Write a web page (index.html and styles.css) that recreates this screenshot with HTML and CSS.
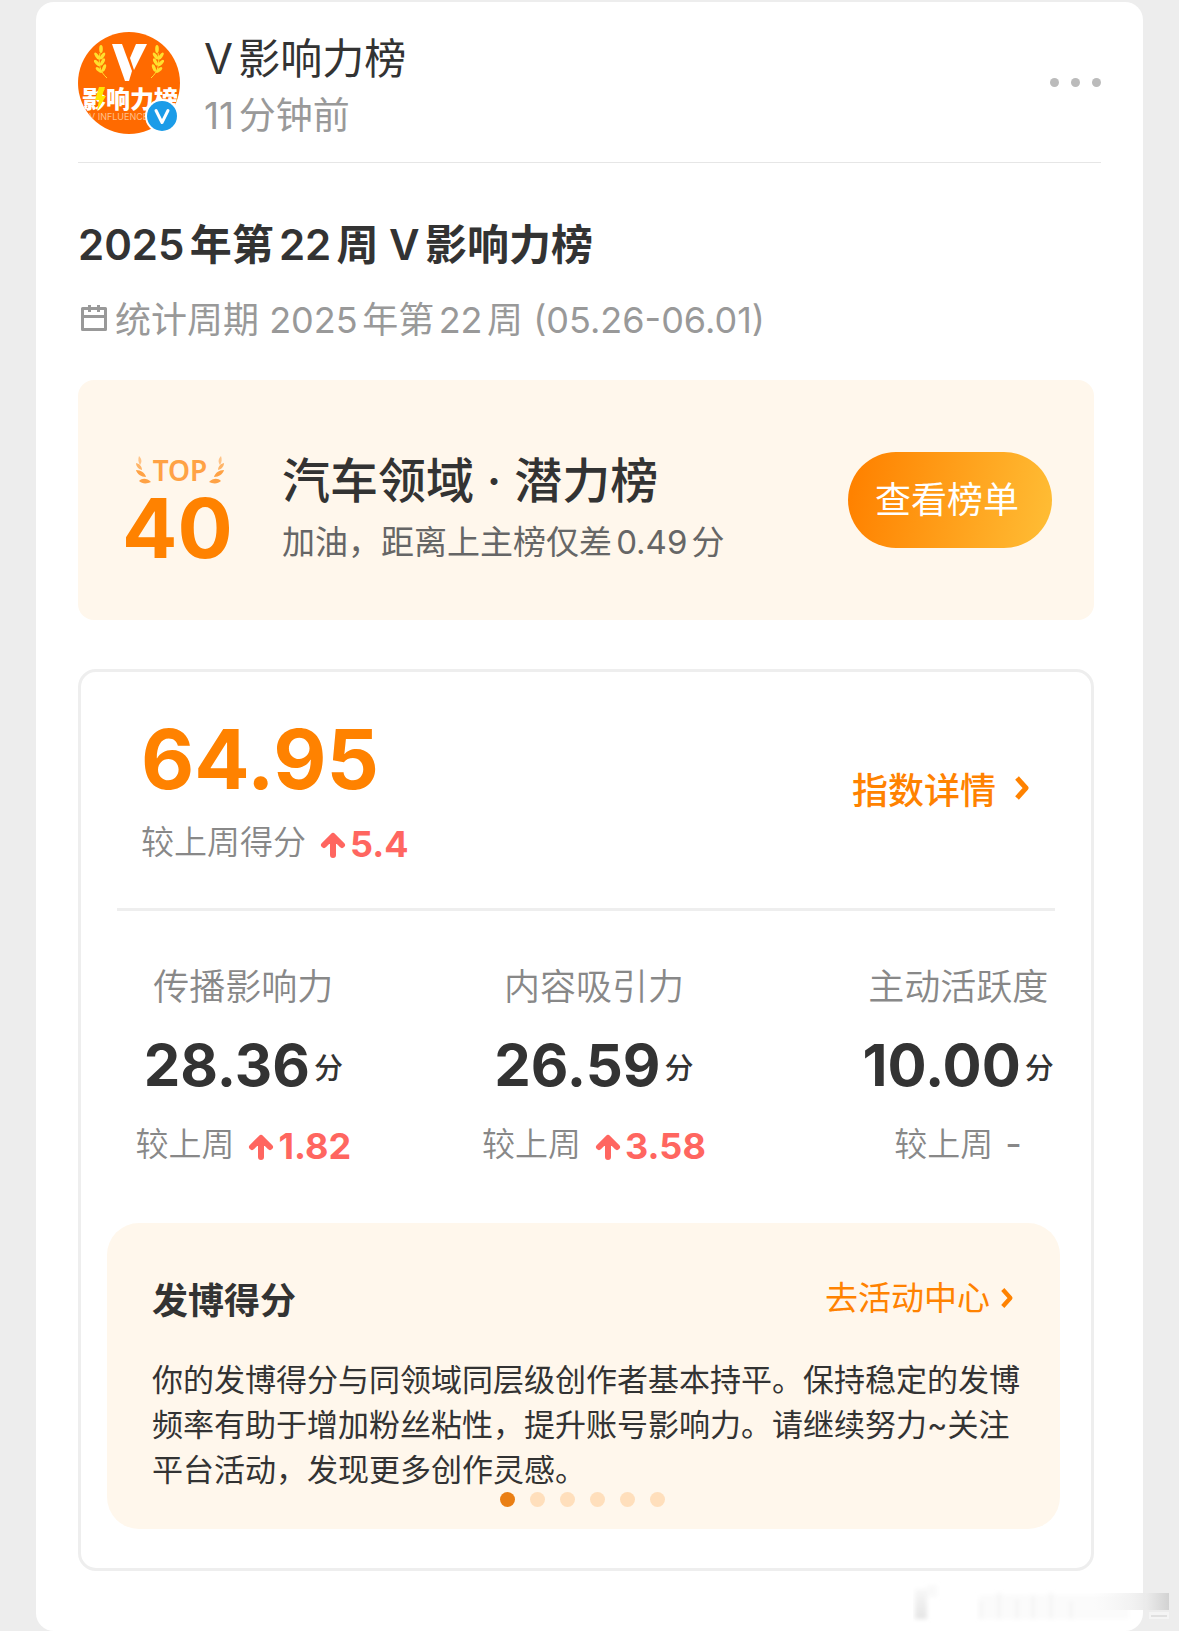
FILE: index.html
```html
<!DOCTYPE html>
<html lang="zh-CN">
<head>
    <meta charset="UTF-8">
    <meta name="viewport" content="width=device-width, initial-scale=1.0">
    <title>V影响力榜</title>
    <link rel="stylesheet" href="styles.css">
</head>
<body>
    <svg width="0" height="0" class="symbols" aria-hidden="true">
        <symbol id="icon-up" viewBox="0 0 26 28">
            <path d="M13 24V8M4 14l9-9 9 9" fill="none" stroke="currentColor" stroke-width="6" stroke-linecap="round" stroke-linejoin="round"/>
            <path d="M13 5l7 8H6Z" fill="currentColor"/>
        </symbol>
        <symbol id="icon-right" viewBox="0 0 16 26">
            <path d="M3 3l9 10L3 23" fill="none" stroke="currentColor" stroke-width="5" stroke-linejoin="round"/>
        </symbol>
        <symbol id="icon-wheat" viewBox="0 0 14 34">
            <path d="M13 33C6 27 4 19 6 8" fill="none" stroke="currentColor" stroke-width="1"/>
            <g fill="currentColor">
                <ellipse cx="7" cy="4" rx="1.800" ry="4"/>
                <ellipse cx="3" cy="11" rx="1.700" ry="4" transform="rotate(-35 3 11)"/>
                <ellipse cx="8.500" cy="11" rx="1.700" ry="4" transform="rotate(35 8.500 11)"/>
                <ellipse cx="3" cy="18" rx="1.700" ry="4" transform="rotate(-45 3 18)"/>
                <ellipse cx="8.500" cy="17" rx="1.700" ry="4" transform="rotate(30 8.500 17)"/>
                <ellipse cx="5" cy="25" rx="1.700" ry="4" transform="rotate(-50 5 25)"/>
                <ellipse cx="10" cy="23" rx="1.700" ry="4" transform="rotate(20 10 23)"/>
            </g>
        </symbol>
        <symbol id="icon-laurel" viewBox="0 0 16 28">
            <g fill="currentColor">
                <path d="M4 0C7 3 7 6 5 9 3 6 3 3 4 0Z" opacity=".6"/>
                <path d="M1 7c4 1 6 4 6 7-4-1-6-4-6-7Z" opacity=".8"/>
                <path d="M1 14c5 0 9 3 10 7-5 0-9-3-10-7Z"/>
                <path d="M4 25c3-3 8-3 12 1-4 2-9 2-12-1Z"/>
            </g>
        </symbol>
    </svg>

    <div class="page-card">
        <header class="header">
            <svg class="avatar" viewBox="0 0 102 102" role="img" aria-label="V影响力榜">
                <defs>
                    <clipPath id="round"><circle cx="51" cy="51" r="51"/></clipPath>
                </defs>
                <g clip-path="url(#round)">
                    <rect width="102" height="102" fill="#ff6a00"/>
                    <path d="M34 12h10l10 27-3 10h-4Z" fill="#fff"/>
                    <path d="M58 12h11L56 38l-4-12Z" fill="#fff"/>
                    <g color="#ffe02e">
                        <use href="#icon-wheat" x="16" y="13" width="14" height="34"/>
                        <use href="#icon-wheat" x="16" y="13" width="14" height="34" transform="translate(102 0) scale(-1 1)"/>
                    </g>
                    <text x="4" y="76" class="avatar-title">影响力榜</text>
                    <path d="M21 55h6l-3 9h4l-9 15 2-11h-4Z" fill="#ffe600"/>
                    <text x="11" y="88" class="avatar-sub">V INFLUENCE</text>
                </g>
                <circle cx="84" cy="84" r="17" fill="#fff"/>
                <circle cx="84" cy="84" r="15" fill="#1b9ce8"/>
                <path d="M78 78.500 84 90.500l6-12" fill="none" stroke="#fff" stroke-width="3" stroke-linecap="round" stroke-linejoin="round"/>
            </svg>
            <div class="author">
                <div class="author-name">V影响力榜</div>
                <div class="author-time">11分钟前</div>
            </div>
            <button class="more" aria-label="更多"><i></i><i></i><i></i></button>
        </header>

        <main class="content">
            <h1 class="title">2025年第22周 V影响力榜</h1>
            <div class="period">
                <svg class="calendar" viewBox="0 0 26 26" aria-hidden="true">
                    <path d="M1.500 3.500h23v21h-23ZM1.500 11.500h23M8.500 0v7M17.500 0v7" fill="none" stroke="currentColor" stroke-width="3" stroke-linejoin="round"/>
                </svg>
                <span>统计周期 2025年第22周 (05.26-06.01)</span>
            </div>

            <section class="banner">
                <div class="rank">
                    <div class="rank-top">
                        <svg class="laurel" aria-hidden="true"><use href="#icon-laurel"/></svg>
                        <span>TOP</span>
                        <svg class="laurel laurel-right" aria-hidden="true"><use href="#icon-laurel"/></svg>
                    </div>
                    <div class="rank-num">40</div>
                </div>
                <div class="banner-text">
                    <h2>汽车领域 · 潜力榜</h2>
                    <p>加油，距离上主榜仅差0.49分</p>
                </div>
                <button class="banner-btn">查看榜单</button>
            </section>

            <section class="score-card">
                <div class="score-head">
                    <div>
                        <div class="score">64.95</div>
                        <div class="delta score-delta">较上周得分 <svg class="up" aria-hidden="true"><use href="#icon-up"/></svg><b>5.4</b></div>
                    </div>
                    <a href="#" class="detail-link">指数详情 <svg class="chevron" aria-hidden="true"><use href="#icon-right"/></svg></a>
                </div>

                <div class="metrics">
                    <div class="metric">
                        <div class="metric-label">传播影响力</div>
                        <div class="metric-value">28.36<small>分</small></div>
                        <div class="delta">较上周 <svg class="up" aria-hidden="true"><use href="#icon-up"/></svg><b>1.82</b></div>
                    </div>
                    <div class="metric">
                        <div class="metric-label">内容吸引力</div>
                        <div class="metric-value">26.59<small>分</small></div>
                        <div class="delta">较上周 <svg class="up" aria-hidden="true"><use href="#icon-up"/></svg><b>3.58</b></div>
                    </div>
                    <div class="metric">
                        <div class="metric-label">主动活跃度</div>
                        <div class="metric-value">10.00<small>分</small></div>
                        <div class="delta">较上周<span class="flat">-</span></div>
                    </div>
                </div>

                <div class="tip">
                    <div class="tip-head">
                        <h3>发博得分</h3>
                        <a href="#" class="tip-link">去活动中心 <svg class="chevron" aria-hidden="true"><use href="#icon-right"/></svg></a>
                    </div>
                    <p>你的发博得分与同领域同层级创作者基本持平。保持稳定的发博频率有助于增加粉丝粘性，提升账号影响力。请继续努力~关注平台活动，发现更多创作灵感。</p>
                    <div class="dots">
                        <button class="dot active" aria-label="第1页"></button>
                        <button class="dot" aria-label="第2页"></button>
                        <button class="dot" aria-label="第3页"></button>
                        <button class="dot" aria-label="第4页"></button>
                        <button class="dot" aria-label="第5页"></button>
                        <button class="dot" aria-label="第6页"></button>
                    </div>
                </div>
            </section>
        </main>

        <!-- faded mark over the bottom right corner -->
        <svg class="mark" viewBox="0 0 260 44" aria-hidden="true">
            <defs>
                <linearGradient id="fade" x1="0" y1="0" x2="0" y2="1">
                    <stop offset="0" stop-color="#f8f8f8"/>
                    <stop offset="1" stop-color="#e4e4e4"/>
                </linearGradient>
                <linearGradient id="smear" x1="0" y1="0" x2="1" y2="0">
                    <stop offset="0" stop-color="#f4f4f4" stop-opacity="0"/>
                    <stop offset=".7" stop-color="#ebebeb"/>
                    <stop offset="1" stop-color="#d2d2d2"/>
                </linearGradient>
                <filter id="soft"><feGaussianBlur stdDeviation="2"/></filter>
            </defs>
            <g filter="url(#soft)">
                <rect x="2" y="8" width="12" height="30" fill="url(#fade)"/>
                <rect x="14" y="4" width="10" height="12" fill="#f9f9f9"/>
                <path d="M66 14h150v24h-150z" fill="#fbfbfb"/>
                <path d="M66 20h4v18h-4zM84 12h4v26h-4zM102 18h4v20h-4zM118 14h4v24h-4zM136 12h4v26h-4zM156 20h4v18h-4z" fill="#f5f5f5"/>
            </g>
            <rect x="180" y="12" width="76" height="17" fill="url(#smear)"/>
            <path d="M236 31h20v7h-20z" fill="#f4f4f4"/>
            <path d="M238 34h16v2h-16z" fill="#e0e0e0"/>
        </svg>
    </div>
</body>
</html>
```
FILE: styles.css
```css
* {
    box-sizing: border-box;
}
body {
    margin: 0;
    background-color: #ededed;
    color: #333;
    font-family: Inter, "Noto Sans CJK SC", sans-serif;
    text-autospace: normal;
}
h1, h2, h3, p {
    margin: 0;
}
a {
    text-decoration: none;
}
button {
    padding: 0;
    border: none;
    font-family: inherit;
    cursor: pointer;
}
.symbols {
    position: absolute;
}
.page-card {
    position: relative;
    margin: 2px 36px 0;
    padding: 28px 42px 60px;
    background-color: #fff;
    border-radius: 18px;
}

/* header */
.header {
    display: flex;
    align-items: flex-start;
    padding-bottom: 18px;
    border-bottom: 1px solid #e6e6e6;
}
.avatar {
    width: 102px;
    height: 102px;
    margin: 2px 24px 0 0;
}
.avatar-title {
    fill: #fff;
    font-size: 24px;
    font-weight: 900;
}
.avatar-sub {
    fill: #ffc08a;
    font-size: 9px;
}
.author {
    flex: 1;
    line-height: 57px;
}
.author-name {
    font-size: 42px;
}
.author-time {
    font-size: 37px;
    color: #999;
}
.more {
    display: flex;
    gap: 12px;
    padding: 48px 0 10px;
    background: none;
}
.more i {
    width: 9px;
    height: 9px;
    border-radius: 50%;
    background-color: #bbb;
}

.content {
    padding-right: 7px;
}
.title {
    margin-top: 52px;
    font-size: 42px;
    line-height: 60px;
    font-weight: 600;
}
.period {
    display: flex;
    align-items: center;
    gap: 8px;
    margin-top: 20px;
    padding-left: 3px;
    font-size: 36px;
    line-height: 50px;
    color: #999;
}
.calendar {
    width: 26px;
    height: 26px;
    margin-bottom: 4px;
}

/* rank banner */
.banner {
    display: flex;
    align-items: center;
    margin-top: 35px;
    padding: 49px 42px 49px 44px;
    background-color: #fff7ec;
    border-radius: 16px;
}
.rank {
    width: 106px;
    margin-right: 54px;
    padding-top: 24px;
    text-align: center;
    color: #ff8200;
}
.rank-top {
    display: flex;
    justify-content: center;
    align-items: center;
    gap: 2px;
    padding-left: 10px;
    font-family: "Noto Sans", sans-serif;
    font-size: 28px;
    line-height: 30px;
    font-weight: 600;
    color: #ffa245;
}
.laurel {
    width: 16px;
    height: 28px;
}
.laurel-right {
    transform: scaleX(-1);
}
.rank-num {
    margin-top: 4px;
    font-size: 82px;
    line-height: 80px;
    font-weight: 700;
}
.banner-text {
    flex: 1;
    padding-top: 20px;
}
.banner-text h2 {
    font-size: 48px;
    line-height: 64px;
    font-weight: 500;
}
.banner-text p {
    font-size: 33px;
    line-height: 58px;
    color: #666;
}
.banner-btn {
    width: 204px;
    height: 96px;
    padding: 0 6px 6px 0;
    border-radius: 48px;
    background: linear-gradient(100deg, #ff8200 5%, #ffbb33 95%);
    color: #fff;
    font-size: 36px;
}

/* score card */
.score-card {
    margin-top: 49px;
    padding-bottom: 39px;
    border: 3px solid #eee;
    border-radius: 18px;
}
.score-head {
    display: flex;
    justify-content: space-between;
    align-items: center;
    margin: 0 36px;
    padding: 48px 25px 41px 24px;
    border-bottom: 3px solid #eee;
}
.score {
    font-size: 82px;
    line-height: 80px;
    font-weight: 700;
    color: #ff8200;
}
.delta {
    display: flex;
    align-items: center;
    justify-content: center;
    font-size: 33px;
    line-height: 50px;
    font-weight: 350;
    color: #888;
}
.score-delta {
    justify-content: flex-start;
    margin-top: 17px;
}
.delta b {
    margin-top: 4px;
    font-size: 36px;
    line-height: 46px;
    font-weight: 700;
    color: #ff6660;
}
.up {
    width: 26px;
    height: 28px;
    margin: 6px 4px 0 14px;
    color: #ff6660;
}
.flat {
    margin-left: 12px;
    font-size: 36px;
    font-weight: 400;
}
.detail-link, .tip-link {
    display: flex;
    align-items: center;
    gap: 18px;
    font-size: 36px;
    font-weight: 500;
    color: #ff8200;
}
.detail-link {
    padding-bottom: 12px;
}
.chevron {
    width: 16px;
    height: 26px;
}
.metrics {
    display: grid;
    grid-template-columns: 8fr 8fr 9fr;
    column-gap: 134px;
    padding: 51px 11px 0 54px;
    text-align: center;
    white-space: nowrap;
}
.metric {
    display: flex;
    flex-direction: column;
    align-items: center;
    min-width: 0;
}
.metric-label {
    font-size: 36px;
    line-height: 50px;
    font-weight: 350;
    color: #888;
}
.metric-value {
    display: flex;
    align-items: center;
    gap: 4px;
    margin: 18px 0 19px;
    font-size: 58px;
    line-height: 70px;
    font-weight: 700;
}
.metric-value small {
    padding-top: 8px;
    font-size: 29px;
    line-height: 62px;
    font-weight: 500;
}

/* tip */
.tip {
    margin: 54px 31px 0 26px;
    padding: 53px 36px 22px 45px;
    background-color: #fff7ec;
    border-radius: 32px;
}
.tip-head {
    display: flex;
    justify-content: space-between;
    align-items: flex-start;
    line-height: 50px;
    padding-right: 10px;
}
.tip h3 {
    font-size: 36px;
    font-weight: 700;
}
.tip-link {
    gap: 10px;
    font-size: 33px;
    line-height: 44px;
    font-weight: 400;
}
.tip-link .chevron {
    width: 14px;
    height: 22px;
}
.tip p {
    margin-top: 31px;
    font-size: 31px;
    line-height: 45px;
}
.dots {
    display: flex;
    justify-content: center;
    gap: 15px;
    padding-right: 12px;
}
.dot {
    width: 15px;
    height: 15px;
    border-radius: 50%;
    background-color: #ffdfbc;
}
.dot.active {
    background-color: #ea7f14;
}

.mark {
    position: absolute;
    right: -30px;
    bottom: 6px;
    width: 260px;
    height: 44px;
}
```
